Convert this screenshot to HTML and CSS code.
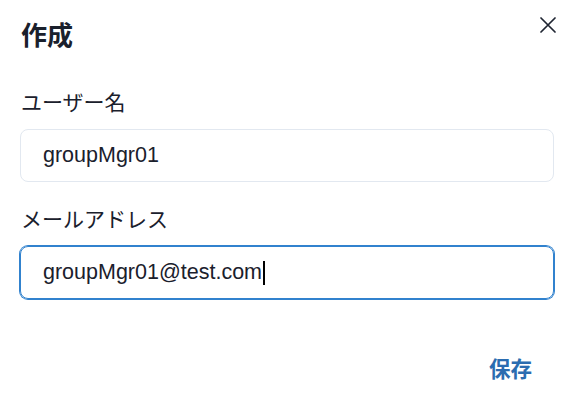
FILE: index.html
```html
<!DOCTYPE html>
<html lang="ja">
<head>
<meta charset="utf-8">
<title>作成</title>
<link rel="stylesheet" href="styles.css">
</head>
<body>
<div class="modal">
  <header class="modal-header">
    <h1 class="modal-title">作成</h1>
    <button class="close-btn" aria-label="Close">
      <svg width="16" height="16" viewBox="0 0 16 16"><path d="M1 1 L15 15 M15 1 L1 15" stroke="#1f2532" stroke-width="1.7" stroke-linecap="round" fill="none"/></svg>
    </button>
  </header>
  <div class="modal-body">
    <div class="field">
      <label class="field-label">ユーザー名</label>
      <div class="input">groupMgr01</div>
    </div>
    <div class="field">
      <label class="field-label">メールアドレス</label>
      <div class="input input-focus">groupMgr01@test.com<span class="caret"></span></div>
    </div>
  </div>
  <footer class="modal-footer">
    <button class="save-btn">保存</button>
  </footer>
</div>
</body>
</html>
```
FILE: styles.css
```css
html, body {
  margin: 0;
  padding: 0;
  background: #ffffff;
}
body {
  font-family: "Liberation Sans", "Noto Sans CJK JP", sans-serif;
  color: #1a202c;
  width: 578px;
  height: 420px;
  overflow: hidden;
}
.modal {
  display: flex;
  flex-direction: column;
}
.modal-header {
  display: flex;
  justify-content: space-between;
  align-items: flex-start;
  padding: 14px 14px 0 21px;
  height: 40px;
}
.modal-title {
  margin: 0;
  font-family: "Noto Sans CJK JP", sans-serif;
  font-size: 26px;
  font-weight: 700;
  line-height: 40px;
}
.close-btn {
  width: 32px;
  height: 32px;
  margin-top: -5px;
  border: none;
  background: transparent;
  padding: 0;
  display: flex;
  align-items: center;
  justify-content: center;
}
.modal-body {
  padding: 32px 24px 0 20px;
  display: flex;
  flex-direction: column;
  gap: 21px;
}
.field {
  display: flex;
  flex-direction: column;
}
.field-label {
  font-family: "Noto Sans CJK JP", sans-serif;
  font-size: 21px;
  line-height: 30px;
  margin: 0 0 13px 1px;
  color: #1a202c;
}
.input {
  box-sizing: border-box;
  height: 53px;
  border: 1px solid #e2e8f0;
  border-radius: 8px;
  padding: 0 22px;
  font-size: 21.5px;
  line-height: 51px;
  color: #1a202c;
  display: flex;
  align-items: center;
}
.input-focus {
  border-color: #3182ce;
  box-shadow: 0 0 0 1px #3182ce;
}
.caret {
  display: inline-block;
  width: 2px;
  height: 24px;
  background: #000;
  margin-left: 1px;
}
.modal-footer {
  display: flex;
  justify-content: flex-end;
  padding: 48px 26px 0 0;
}
.save-btn {
  height: 40px;
  padding: 0 20px;
  border: none;
  background: transparent;
  font-family: "Noto Sans CJK JP", sans-serif;
  font-size: 21.5px;
  font-weight: 600;
  color: #2b6cb0;
}
```
